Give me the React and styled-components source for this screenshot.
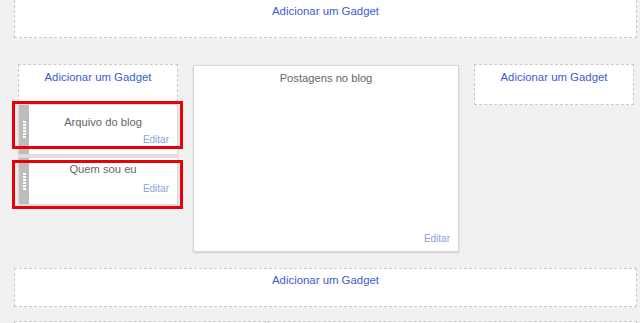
import React from 'react'
import styled, { createGlobalStyle } from 'styled-components'

const GlobalStyle = createGlobalStyle`
	body {
		margin: 0;
		background: #f1f1f1;
		font-family: Arial, "Liberation Sans", sans-serif;
		font-size: 12px;
	}
`

const Page = styled.div`
	width: 640px;
	height: 323px;
	overflow: hidden;
	display: flex;
	flex-direction: column;
	& > * {
		flex-shrink: 0;
	}
`

const DropZone = styled.div`
	box-sizing: border-box;
	flex-shrink: 0;
	background: #fff;
	border: 1px dashed #c8c8c8;
	${(p) => p.$noTop && 'border-top: none;'}
	height: ${(p) => p.$height}px;
	width: ${(p) => p.$width}px;
	margin-left: ${(p) => p.$left || 0}px;
	padding-top: ${(p) => p.$pad || 4}px;
	text-align: center;
`

const AddLink = styled.a`
	color: #3d5ccf;
	font-size: 11.4px;
	line-height: 14px;
	cursor: pointer;
`

const Columns = styled.div`
	display: flex;
	align-items: flex-start;
	gap: 15px;
	margin: 26px 0 0 18px;
`

const Sidebar = styled.div`
	position: relative;
	width: 160px;
	display: flex;
	flex-direction: column;
`

const Widget = styled.div`
	box-sizing: border-box;
	position: relative;
	flex-shrink: 0;
	height: ${(p) => p.$height}px;
	margin-top: ${(p) => p.$gap}px;
	background: #fff;
	border: 1px solid #dcdcdc;
	box-shadow: 0 1px 2px rgba(0, 0, 0, 0.12);
	display: flex;
`

const Handle = styled.div`
	width: 10px;
	background: #bdbdbd;
	display: flex;
	flex-direction: column;
	justify-content: center;
	align-items: center;
	gap: 1px;
	span {
		width: 3px;
		height: 2px;
		background: #fff;
	}
`

const WidgetBody = styled.div`
	flex: 1;
	display: flex;
	flex-direction: column;
	padding-top: ${(p) => p.$top}px;
`

const Title = styled.div`
	color: #666;
	font-size: 11.2px;
	line-height: 14px;
	text-align: center;
`

const Edit = styled.a`
	color: #8aa3dc;
	font-size: 10px;
	line-height: 13px;
	align-self: flex-end;
	margin-top: auto;
	margin-right: 8px;
	margin-bottom: ${(p) => p.$bottom}px;
	cursor: pointer;
`

const Marker = styled.div`
	position: absolute;
	left: -6px;
	width: 171px;
	top: ${(p) => p.$top}px;
	height: ${(p) => p.$height}px;
	box-sizing: border-box;
	border: 3px solid #e8000b;
	pointer-events: none;
`

const Main = styled.div`
	box-sizing: border-box;
	flex-shrink: 0;
	width: 266px;
	height: 187px;
	margin-top: 1px;
	background: #fff;
	border: 1px solid #d6d6d6;
	box-shadow: 0 1px 2px rgba(0, 0, 0, 0.15);
	display: flex;
	flex-direction: column;
	padding-top: 5px;
`

const FooterRow = styled.div`
	display: flex;
	gap: 2px;
	margin: 14px 0 0 14px;
`

function Grip() {
	return (
		<Handle>
			{[0, 1, 2, 3, 4, 5].map((i) => (
				<span key={i} />
			))}
		</Handle>
	)
}

export default function App() {
	return (
		<Page>
			<GlobalStyle />
			<DropZone $noTop $height={38} $width={623} $left={14} $pad={4}>
				<AddLink>Adicionar um Gadget</AddLink>
			</DropZone>
			<Columns>
				<Sidebar>
					<DropZone $height={38} $width={160} $pad={5}>
						<AddLink>Adicionar um Gadget</AddLink>
					</DropZone>
					<Widget $height={51} $gap={2}>
						<Grip />
						<WidgetBody $top={10}>
							<Title>Arquivo do blog</Title>
							<Edit $bottom={8}>Editar</Edit>
						</WidgetBody>
					</Widget>
					<Widget $height={48} $gap={2}>
						<Grip />
						<WidgetBody $top={4}>
							<Title>Quem sou eu</Title>
							<Edit $bottom={9}>Editar</Edit>
						</WidgetBody>
					</Widget>
					<Marker $top={37} $height={48} />
					<Marker $top={96} $height={49} />
				</Sidebar>
				<Main>
					<Title>Postagens no blog</Title>
					<Edit $bottom={6}>Editar</Edit>
				</Main>
				<DropZone $height={41} $width={160} $pad={5}>
					<AddLink>Adicionar um Gadget</AddLink>
				</DropZone>
			</Columns>
			<DropZone $height={39} $width={623} $left={14} $pad={4} style={{ marginTop: 16 }}>
				<AddLink>Adicionar um Gadget</AddLink>
			</DropZone>
			<FooterRow>
				<DropZone $height={20} $width={252} />
				<DropZone $height={20} $width={369} />
			</FooterRow>
		</Page>
	)
}
